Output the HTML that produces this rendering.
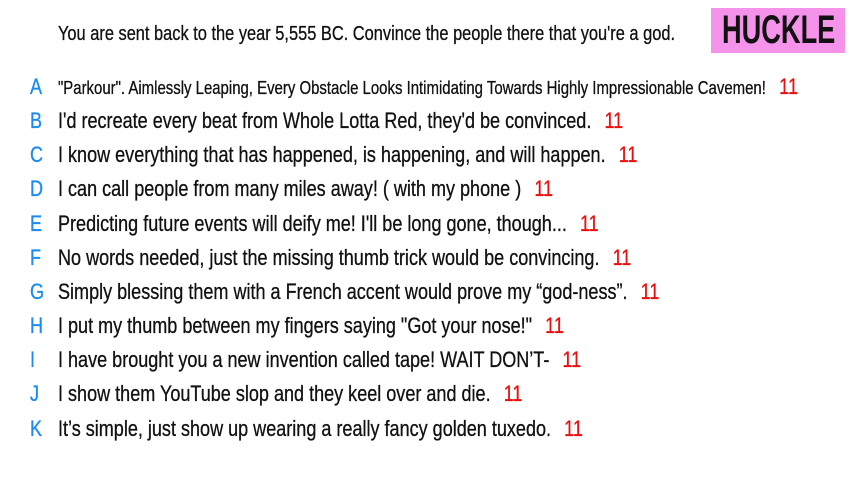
<!DOCTYPE html>
<html><head><meta charset="utf-8"><style>
html,body{margin:0;padding:0;background:#fff;width:853px;height:480px;overflow:hidden}
body{font-family:"Liberation Sans Narrow","Liberation Sans",sans-serif;color:#111;position:relative}
.l{position:absolute;left:58px;white-space:nowrap;font-size:22px;line-height:26px;transform-origin:0 50%;transform:scaleX(0.82);-webkit-text-stroke:0.3px #111}
.k{position:absolute;left:30px;font-size:22px;line-height:26px;color:#1a8cf0;transform:scaleX(0.82);transform-origin:0 50%;-webkit-text-stroke:0.3px #1a8cf0}
.n{color:#e8110f;margin-left:16px;-webkit-text-stroke:0.3px #e8110f}
#hk{position:absolute;left:711px;top:8px;width:134px;height:45px;background:#f592e9;overflow:hidden}
#hk span{position:absolute;left:11px;top:0;font-size:40px;line-height:45px;font-weight:bold;color:#111;white-space:nowrap;transform:scaleX(0.68);transform-origin:0 50%}
</style></head><body>
<div class="l" style="top:21px;font-size:20px;transform:scaleX(0.82)">You are sent back to the year 5,555 BC. Convince the people there that you're a god.</div>
<div id="hk"><span>HUCKLE</span></div>
<div class="k" style="top:74px">A</div><div class="l" style="top:74px;font-size:18px;transform:scaleX(0.83)">"Parkour". Aimlessly Leaping, Every Obstacle Looks Intimidating Towards Highly Impressionable Cavemen!<span class="n" style="font-size:22px">11</span></div>
<div class="k" style="top:108px">B</div><div class="l" style="top:108px">I'd recreate every beat from Whole Lotta Red, they'd be convinced.<span class="n">11</span></div>
<div class="k" style="top:142px">C</div><div class="l" style="top:142px">I know everything that has happened, is happening, and will happen.<span class="n">11</span></div>
<div class="k" style="top:176px">D</div><div class="l" style="top:176px">I can call people from many miles away! ( with my phone )<span class="n">11</span></div>
<div class="k" style="top:211px">E</div><div class="l" style="top:211px">Predicting future events will deify me! I'll be long gone, though...<span class="n">11</span></div>
<div class="k" style="top:245px">F</div><div class="l" style="top:245px">No words needed, just the missing thumb trick would be convincing.<span class="n">11</span></div>
<div class="k" style="top:279px">G</div><div class="l" style="top:279px">Simply blessing them with a French accent would prove my “god-ness”.<span class="n">11</span></div>
<div class="k" style="top:313px">H</div><div class="l" style="top:313px">I put my thumb between my fingers saying "Got your nose!"<span class="n">11</span></div>
<div class="k" style="top:347px">I</div><div class="l" style="top:347px">I have brought you a new invention called tape! WAIT DON’T-<span class="n">11</span></div>
<div class="k" style="top:381px">J</div><div class="l" style="top:381px">I show them YouTube slop and they keel over and die.<span class="n">11</span></div>
<div class="k" style="top:416px">K</div><div class="l" style="top:416px">It’s simple, just show up wearing a really fancy golden tuxedo.<span class="n">11</span></div>
</body></html>
